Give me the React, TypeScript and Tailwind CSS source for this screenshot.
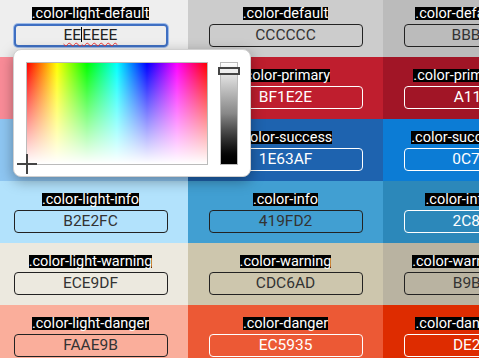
import React from 'react';

type Swatch = { name: string; hex: string; bg: string; dark: boolean };

const columns: Swatch[][] = [
  [
    { name: '.color-light-default', hex: 'EEEEEE', bg: '#EEEEEE', dark: false },
    { name: '.color-light-primary', hex: 'F78C98', bg: '#FA8C98', dark: false },
    { name: '.color-light-success', hex: '8EC6F2', bg: '#8EC6F2', dark: false },
    { name: '.color-light-info', hex: 'B2E2FC', bg: '#B2E2FC', dark: false },
    { name: '.color-light-warning', hex: 'ECE9DF', bg: '#ECE9DF', dark: false },
    { name: '.color-light-danger', hex: 'FAAE9B', bg: '#FAAE9B', dark: false },
  ],
  [
    { name: '.color-default', hex: 'CCCCCC', bg: '#CCCCCC', dark: false },
    { name: '.color-primary', hex: 'BF1E2E', bg: '#BF1E2E', dark: true },
    { name: '.color-success', hex: '1E63AF', bg: '#1E63AF', dark: true },
    { name: '.color-info', hex: '419FD2', bg: '#419FD2', dark: false },
    { name: '.color-warning', hex: 'CDC6AD', bg: '#CDC6AD', dark: false },
    { name: '.color-danger', hex: 'EC5935', bg: '#EC5935', dark: true },
  ],
  [
    { name: '.color-default-darker', hex: 'BBBBBB', bg: '#BBBBBB', dark: false },
    { name: '.color-primary-darker', hex: 'A11526', bg: '#A11526', dark: true },
    { name: '.color-success-darker', hex: '0C7CD5', bg: '#0C7CD5', dark: true },
    { name: '.color-info-darker', hex: '2C88BA', bg: '#2C88BA', dark: true },
    { name: '.color-warning-darker', hex: 'B9B3A1', bg: '#B9B3A1', dark: false },
    { name: '.color-danger-darker', hex: 'DE2C00', bg: '#DE2C00', dark: true },
  ],
];

function Cell({ s, focused }: { s: Swatch; focused?: boolean }) {
  return (
    <div
      className="flex h-[62px] flex-col items-center pt-[12px]"
      style={{ backgroundColor: s.bg }}
    >
      <span className="inline-block h-[13px] whitespace-nowrap bg-black text-[14.5px] leading-[13px] text-white">
        {s.name}
      </span>
      {focused ? (
        <div className="mt-[4px] flex h-[23px] w-[154px] items-center justify-center rounded-[4px] border-2 border-[#3f6fc2] text-[15.5px] text-[#222] ring-1 ring-[#9dbbe9]">
          <span className="underline decoration-wavy decoration-[#e33] decoration-1 underline-offset-2">
            EE<span className="inline-block h-[15px] w-px translate-y-[2px] bg-black" />EEEE
          </span>
        </div>
      ) : (
        <div
          className={
            s.dark
              ? 'mt-[4px] flex h-[23px] w-[154px] items-center justify-center rounded-[4px] border border-white text-[15.5px] text-white'
              : 'mt-[4px] flex h-[23px] w-[154px] items-center justify-center rounded-[4px] border border-[#222] text-[15.5px] text-[#333]'
          }
        >
          {s.hex}
        </div>
      )}
    </div>
  );
}

function ColorPicker() {
  return (
    <div className="absolute left-[13px] top-[49px] flex h-[128px] w-[238px] gap-[12px] rounded-[8px] border border-[#d0d0d0] bg-white p-[12px] shadow-[0_4px_14px_rgba(0,0,0,0.35)]">
      <div className="relative h-[103px] w-[183px] border border-[#bbb] bg-[linear-gradient(to_right,#f00,#ff0,#0f0,#0ff,#00f,#f0f,#f00)]">
        <div className="absolute inset-0 bg-linear-to-b from-transparent to-white" />
        <div className="absolute bottom-[-10px] left-[-10px] h-[20px] w-[20px]">
          <div className="absolute left-0 top-[9px] h-[2px] w-[20px] bg-[#444]" />
          <div className="absolute left-[9px] top-0 h-[20px] w-[2px] bg-[#444]" />
        </div>
      </div>
      <div className="relative h-[103px] w-[18px] border border-[#bbb] bg-linear-to-b from-white via-[#888] to-black">
        <div className="absolute left-[-3px] top-[4px] h-[8px] w-[22px] border-2 border-[#444] bg-[#eee]" />
      </div>
    </div>
  );
}

export default function App() {
  return (
    <div className="relative h-[358px] w-[479px] overflow-hidden font-['Roboto',sans-serif]">
      <div className="-ml-[7px] -mt-[5px] flex">
        {columns.map((col, ci) => (
          <div key={ci} className="flex w-[195px] shrink-0 flex-col">
            {col.map((s, ri) => (
              <Cell key={s.name} s={s} focused={ci === 0 && ri === 0} />
            ))}
          </div>
        ))}
      </div>
      <ColorPicker />
    </div>
  );
}
